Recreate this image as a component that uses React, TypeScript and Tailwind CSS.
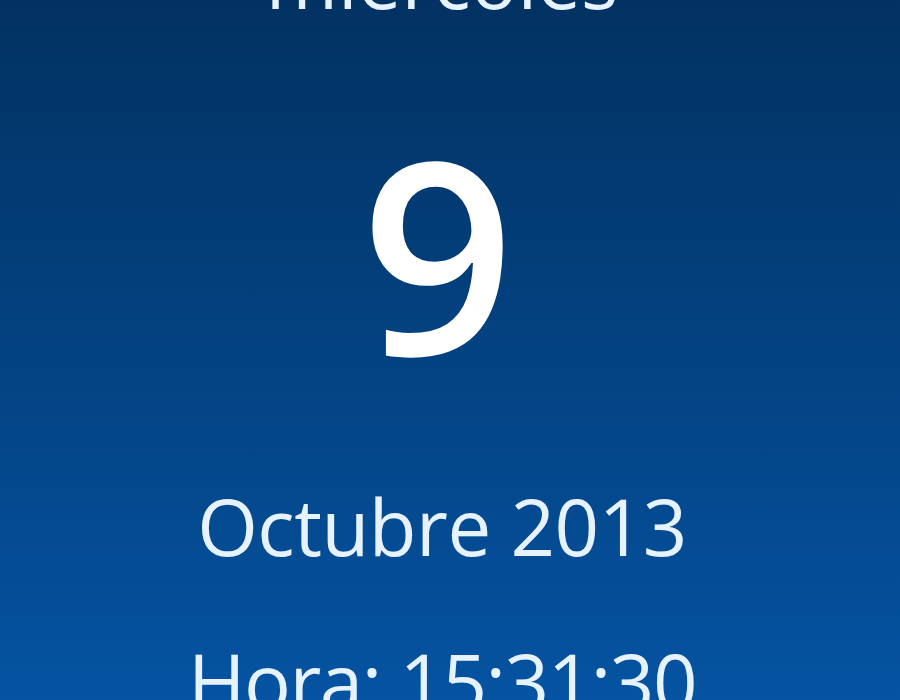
export default function App() {
  return (
    <div
      className="flex h-[700px] w-[900px] flex-col items-center overflow-hidden bg-gradient-to-b from-[#023262] to-[#0553a2] pr-[16px] text-[#e6f3ff]"
      style={{ fontFamily: '"Open Sans", "Noto Sans", sans-serif' }}
    >
      {/* day of week, clipped by the top edge */}
      <div className="mt-[-60px] text-[78px] leading-none">miércoles</div>

      {/* day number */}
      <div className="mt-[100px] mr-[8px] text-[268px] font-semibold leading-none text-white">9</div>

      {/* month and year */}
      <div className="mt-[101px] text-[78px] leading-none tracking-[-0.5px]">Octubre 2013</div>

      {/* clock */}
      <div className="mt-[77px] text-[78px] leading-none tracking-[-1.5px]">Hora: 15:31:30</div>
    </div>
  );
}
